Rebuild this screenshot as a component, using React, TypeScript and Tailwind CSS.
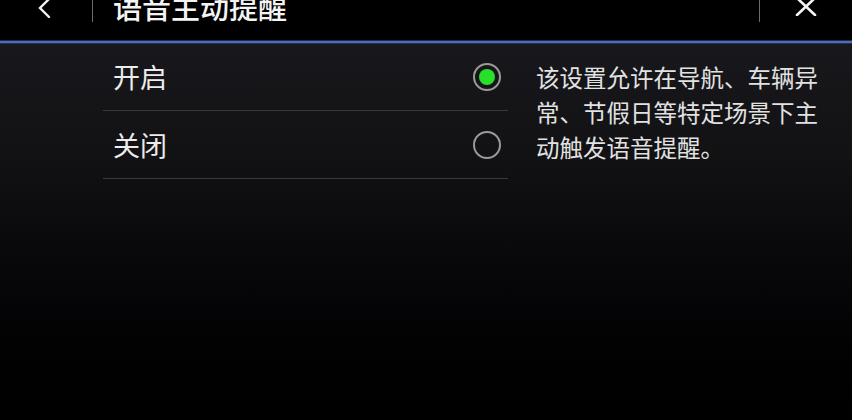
import { useState } from 'react';

const OPTIONS = ['开启', '关闭'];

const FONT = '"Noto Sans CJK SC", "Noto Sans", sans-serif';

export default function App() {
  const [selected, setSelected] = useState(0);

  return (
    <div
      className="w-[852px] h-[420px] overflow-hidden flex flex-col bg-black text-[#ececec]"
      style={{ fontFamily: FONT }}
    >
      {/* header */}
      <div className="h-[40px] shrink-0 bg-black flex items-start relative">
        <button className="w-[92px] h-[22px] flex items-start justify-center pr-[4px]">
          <svg width="20" height="20" viewBox="0 0 20 20" className="-mt-[2px]">
            <path d="M15 1 L6 10 L15 19" fill="none" stroke="#f2f2f2" strokeWidth="2.4" strokeLinecap="round" />
          </svg>
        </button>
        <div className="w-px h-[22px] bg-[#6b6b6b]" />
        <div className="pl-[20px] -mt-[14px] text-[29px] leading-[40px] font-medium text-[#f4f4f4]">
          语音主动提醒
        </div>
        <div className="ml-auto w-px h-[22px] bg-[#6b6b6b]" />
        <button className="w-[92px] h-[22px] flex items-start justify-center">
          <svg width="23" height="18" viewBox="0 0 23 18" className="-mt-[2px]">
            <path d="M2 0 L20 17 M20 0 L2 17" fill="none" stroke="#f4f4f4" strokeWidth="2.6" strokeLinecap="round" />
          </svg>
        </button>
      </div>
      <div className="h-px shrink-0 bg-[#1d2b57]" />
      <div className="h-[2px] shrink-0 bg-[#4d6db5]" />
      <div className="h-px shrink-0 bg-[#22305a]" />

      {/* body */}
      <div className="flex-1 flex bg-[linear-gradient(to_bottom,#18181c_0%,#121215_30%,#07070a_60%,#020203_80%,#000000_100%)]">
        <div className="w-[405px] ml-[103px] flex flex-col">
          {OPTIONS.map((label, i) => (
            <button
              key={label}
              onClick={() => setSelected(i)}
              className={`flex items-center justify-between border-b border-[#3a3a3e] text-left ${i === 0 ? 'h-[67px]' : 'h-[68px]'}`}
            >
              <span className="pl-[10px] -mt-[1px] text-[27px] leading-none text-[#ececec]">{label}</span>
              <span className="mr-[7px] w-[28px] h-[28px] rounded-full border-2 border-[#9a9a9a] flex items-center justify-center">
                {selected === i && <span className="w-[16px] h-[16px] rounded-full bg-[#27e02a]" />}
              </span>
            </button>
          ))}
        </div>
        <div className="ml-[28px] w-[292px] pt-[16px] text-[23.5px] leading-[35px] text-[#e2e2e2]">
          该设置允许在导航、车辆异常、节假日等特定场景下主动触发语音提醒。
        </div>
      </div>
    </div>
  );
}
